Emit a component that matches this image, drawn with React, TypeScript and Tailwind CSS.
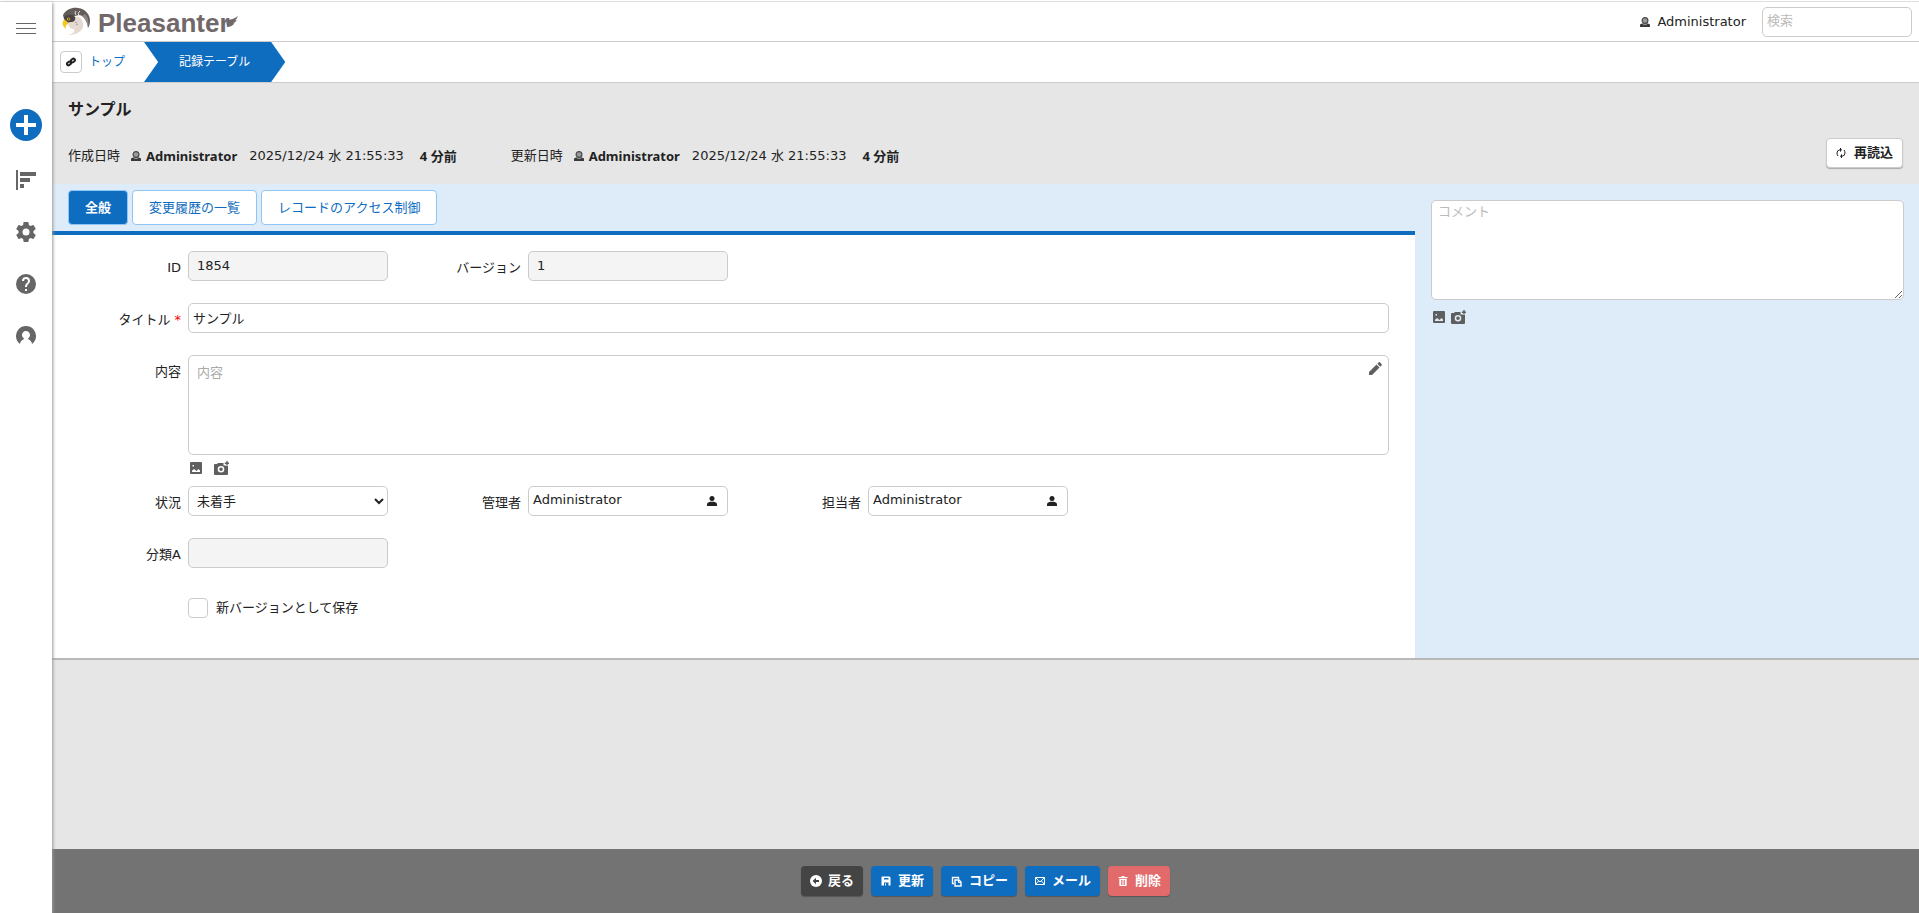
import type { ReactNode } from "react";

const LATIN = "font-['DejaVu_Sans','Noto_Sans_CJK_JP',sans-serif]";
const BOLD = "font-bold font-['Noto_Sans','Noto_Sans_CJK_JP',sans-serif]";
const BOX = "h-[30px] w-[200px] rounded-[5px] border border-[#cbcbcb]";

function Bird() {
  return (
    <svg width="30" height="30" viewBox="0 0 30 30" aria-hidden="true">
      <path d="M2 8C5 2 12 0 17 1c8 1 12 7 12 13 0 3-1 5-2 7 0-7-3-12-9-13L10 10 3 12z" fill="#645b5b" />
      <path d="M24 7c4 4 4 9 3 14-1-6-3-9-6-12z" fill="#8d8583" />
      <path d="M6 13C11 9 18 8 21 13c4 8-2 15-14 15 5-1 7-3 6-6-3 0-5-2-6-5z" fill="#e5d9d1" />
      <path d="M3 10c4-3 9-3 11 0 1 3-1 5-4 5l-6 1z" fill="#4b4446" />
      <circle cx="7.500" cy="12" r="1.600" fill="#e9b91e" />
      <circle cx="7.600" cy="12" r=".7" fill="#222" />
      <path d="M3 13c2 0 4 2 4 4-2 1-3 2-2 5-3-2-5-7-2-9z" fill="#f4c81f" />
      <path d="M15 4q-2 2 0 4M19 4q-3 2-1 5M15 17l2 1M17 15l1 2M14 19l2 1" stroke="#e8e0dc" strokeWidth="1" fill="none" />
      <path d="M14 15l2 1M15 18l2-1" stroke="#8c7f7b" strokeWidth=".7" />
    </svg>
  );
}

function UserGlyph() {
  return (
    <svg width="10" height="10" viewBox="0 0 10 10" aria-hidden="true" className="shrink-0">
      <path d="M0 10V7.500L2 6.500h6l2 1V10z" fill="#3a3a3a" />
      <circle cx="5" cy="3.500" r="2.900" fill="#9a9a9a" stroke="#4a4a4a" strokeWidth="1.200" />
      <path d="M3.200 7.500h3.600" stroke="#aaa" strokeWidth=".8" />
    </svg>
  );
}

function PersonSolid() {
  return (
    <svg width="10" height="10" viewBox="0 0 10 10" aria-hidden="true">
      <circle cx="5" cy="2.500" r="2.500" fill="#222" />
      <path d="M0 10V8.200C0 6.800 2 6 3.300 5.800h3.400C8 6 10 6.800 10 8.200V10z" fill="#222" />
    </svg>
  );
}

function ImageIcon() {
  return (
    <svg width="12" height="12" viewBox="0 0 12 12" aria-hidden="true">
      <path fillRule="evenodd" fill="#5f5f5f" d="M1 0h10a1 1 0 0 1 1 1v10a1 1 0 0 1-1 1H1a1 1 0 0 1-1-1V1a1 1 0 0 1 1-1zM2.500 3v1.500H4V3zM2 10h8V8.500L8.500 7 6.500 9 4 7 2 8.800z" />
    </svg>
  );
}

function CameraIcon() {
  return (
    <svg width="15" height="14" viewBox="0 0 15 14" aria-hidden="true">
      <path fillRule="evenodd" fill="#5f5f5f" d="M4 2h5.500v2.500H12V5h2v8a1 1 0 0 1-1 1H1a1 1 0 0 1-1-1V4a1 1 0 0 1 1-1h2zm3 3a3.300 3.300 0 1 0 0 6.600A3.300 3.300 0 0 0 7 5zm0 1.500a1.800 1.800 0 1 1 0 3.600 1.800 1.800 0 0 1 0-3.600z" />
      <path d="M13 0v4.400M10.800 2.200h4.200" stroke="#5f5f5f" strokeWidth="1.400" />
    </svg>
  );
}

function Field({ id, label, required, children }: { id: string; label: string; required?: boolean; children: ReactNode }) {
  return (
    <div className="flex items-start">
      <label htmlFor={id} className="mr-[7px] w-[120px] shrink-0 pt-[7px] text-right leading-5">
        {label}
        {required && <span className="ml-1 text-[#f00]">*</span>}
      </label>
      {children}
    </div>
  );
}

function Meta({ label }: { label: string }) {
  return (
    <div className="flex items-center whitespace-nowrap">
      <span className="mr-[11px]">{label}</span>
      <UserGlyph />
      <span className={`mr-3 ml-[5px] ${BOLD}`}>Administrator</span>
      <time>2025/12/24 水 21:55:33</time>
      <span className={`ml-4 ${BOLD}`}>4 分前</span>
    </div>
  );
}

function UserField({ id, label }: { id: string; label: string }) {
  return (
    <Field id={id} label={label}>
      <div className={`flex items-center pr-[10px] pl-1 ${BOX}`}>
        <input id={id} readOnly defaultValue="Administrator" className="min-w-0 flex-1 pb-0.5 outline-none" />
        <button type="button" aria-label={`${label}を選択`}><PersonSolid /></button>
      </div>
    </Field>
  );
}

function Command({ label, tone, children }: { label: string; tone: string; children: ReactNode }) {
  return (
    <button type="button" className={`flex h-[30px] items-center gap-[6px] rounded-[4px] px-[9px] text-white shadow-[0_1px_1px_#555] ${BOLD} ${tone}`}>
      {children}
      <span>{label}</span>
    </button>
  );
}

function Sidebar() {
  return (
    <nav className="z-10 flex w-[52px] shrink-0 flex-col items-center bg-white pt-[21px] text-[#666] shadow-[1px_1px_3px_#999]">
      <button type="button" aria-label="メニュー">
        <svg width="20" height="12" viewBox="0 0 20 12" className="block"><path d="M0 .5h20M0 5.500h20M0 10.500h20" stroke="#666" /></svg>
      </button>
      <button type="button" aria-label="新規作成" className="mt-[74px]">
        <svg width="32" height="32" viewBox="0 0 32 32" className="block">
          <circle cx="16" cy="16" r="16" fill="#0f6dc0" />
          <path d="M16 6v20M6 16h20" stroke="#fff" strokeWidth="4" />
        </svg>
      </button>
      <button type="button" aria-label="表示" className="mt-[29px]">
        <svg width="20" height="20" viewBox="0 0 20 20" className="block"><path d="M0 0h2v20H0zM4 2h16v4H4zM4 8h10v4H4zM4 14h4v4H4z" fill="#666" /></svg>
      </button>
      <button type="button" aria-label="管理" className="mt-[30px]">
        <svg width="24" height="24" viewBox="0 0 24 24" className="block"><path fill="#666" d="M19.430 12.980c.04-.32.07-.64.07-.98s-.03-.66-.07-.98l2.110-1.650c.19-.15.24-.42.12-.64l-2-3.460c-.12-.22-.39-.3-.61-.22l-2.490 1c-.52-.4-1.080-.73-1.690-.98l-.38-2.650A.49.49 0 0 0 14 2h-4c-.25 0-.46.18-.49.42l-.38 2.650c-.61.25-1.170.59-1.690.98l-2.490-1c-.23-.09-.49 0-.61.22l-2 3.460c-.13.22-.07.49.12.64l2.110 1.650c-.04.32-.07.65-.07.98s.03.66.07.98l-2.110 1.650c-.19.15-.24.42-.12.64l2 3.460c.12.22.39.3.61.22l2.490-1c.52.4 1.080.73 1.690.98l.38 2.650c.03.24.24.42.49.42h4c.25 0 .46-.18.49-.42l.38-2.650c.61-.25 1.170-.59 1.690-.98l2.490 1c.23.09.49 0 .61-.22l2-3.460c.12-.22.07-.49-.12-.64zM12 15.500a3.500 3.500 0 1 1 0-7 3.500 3.500 0 0 1 0 7z" /></svg>
      </button>
      <button type="button" aria-label="ヘルプ" className="mt-[28px]">
        <svg width="24" height="24" viewBox="0 0 24 24" className="block"><path fill="#666" d="M12 2a10 10 0 1 0 0 20 10 10 0 0 0 0-20zm1 17h-2v-2h2zm2.070-7.750-.9.920C13.450 12.900 13 13.500 13 15h-2v-.5c0-1.100.45-2.100 1.170-2.830l1.240-1.260A2 2 0 1 0 10 9H8a4 4 0 1 1 8 0c0 .88-.36 1.680-.93 2.250z" /></svg>
      </button>
      <button type="button" aria-label="アカウント" className="mt-[30px]">
        <svg width="20" height="20" viewBox="0 0 20 20" className="block"><path fill="#666" d="M4 18A10 10 0 1 1 16 18Q15.500 14.500 12.300 13.300L12 12.500A4 4 0 1 0 8 12.500L7.700 13.300Q4.500 14.500 4 18z" /></svg>
      </button>
    </nav>
  );
}

export default function App() {
  return (
    <div className={`flex min-h-screen flex-col bg-white pt-px text-[13px] text-[#222] ${LATIN}`}>
      <div className="flex flex-1 border-t border-[#dedede] bg-[#e6e6e6]">
        <Sidebar />
        <div className="flex min-w-0 flex-1 flex-col">
          <header className="flex h-10 items-center justify-between border-b border-[#cbcbcb] bg-white pr-[7px] pl-[9px]">
            <a href="#" className="flex items-center" aria-label="Pleasanter">
              <Bird />
              <span className="ml-[7px] flex items-center pt-0.5 font-['Liberation_Sans',sans-serif] text-[26px] leading-8 font-bold text-[#716869]">
                Pleasanter
                <svg width="12" height="14" viewBox="0 0 12 14" className="-ml-[4px]" aria-hidden="true">
                  <path d="M0 4Q7 4 12 0 11 3 9 4.200l1.800 0Q9 7 7 7.300l1.600 0Q6 11 1 11z" fill="#716869" />
                </svg>
              </span>
            </a>
            <div className="flex items-center">
              <UserGlyph />
              <a href="#" className="mr-[16px] ml-[7px]">Administrator</a>
              <input aria-label="検索" placeholder="検索" className="h-[30px] w-[150px] rounded-[5px] border border-[#cbcbcb] px-1 pb-0.5 outline-none placeholder:text-[#bbb]" />
            </div>
          </header>

          <nav className="flex h-[41px] items-center border-b border-[#cbcbcb] bg-white pl-[8px] text-[12px]" aria-label="パンくず">
            <button type="button" aria-label="リンク" className="flex size-[22px] items-center justify-center rounded-[4px] border border-[#cbcbcb]">
              <svg width="10" height="10" viewBox="0 0 12 12" fill="none" stroke="#222" strokeWidth="2.400">
                <rect x="1" y="6" width="5" height="3.500" rx="1.700" transform="rotate(-40 3.500 7.700)" />
                <rect x="5.800" y="2.500" width="5" height="3.500" rx="1.700" transform="rotate(-40 8.300 4.200)" />
              </svg>
            </button>
            <a href="#" className="mr-[19px] ml-[7px] text-[#0f6dc0]">トップ</a>
            <a href="#" className="flex h-10 items-center bg-[#0f6dc0] pr-[35px] pl-[35px] text-white [clip-path:polygon(0_0,90%_0,100%_50%,90%_100%,0_100%,10%_50%)]">記録テーブル</a>
          </nav>

          <div className="flex items-end justify-between pt-[14px] pr-4 pb-4 pl-4">
            <div>
              <h1 className={`text-[16px] leading-6 ${BOLD}`}>サンプル</h1>
              <div className="mt-[23px] flex gap-[54px] leading-6">
                <Meta label="作成日時" />
                <Meta label="更新日時" />
              </div>
            </div>
            <button type="button" className={`flex h-[30px] items-center gap-2 rounded-[4px] border border-[#cbcbcb] bg-white px-[9px] shadow-[0_1px_1px_#aaa] ${BOLD}`}>
              <svg width="10" height="10" viewBox="0 0 10 10" fill="none" stroke="#222" strokeWidth="1">
                <path d="M6 1.800H4Q1 2 1 5q0 2 1 3M4 8.200h2Q9 8 9 5q0-2-1-3M4.500 0v3.600M5.500 6.400V10" />
              </svg>
              再読込
            </button>
          </div>

          <main className="flex border-b-2 border-[#b8b8b8] bg-[#deebf8]">
            <section className="min-w-0 flex-1 bg-white">
              <div role="tablist" className="flex gap-1 border-b-4 border-[#0f6dc0] bg-[#deebf8] pt-[6px] pb-[6px] pl-4">
                <button role="tab" aria-selected="true" type="button" className={`h-[35px] rounded-[4px] border border-[#8fc6f8] bg-[#0f6dc0] px-4 text-white ${BOLD}`}>全般</button>
                <button role="tab" aria-selected="false" type="button" className="h-[35px] rounded-[4px] border border-[#8fc6f8] bg-white px-4 text-[#0f6dc0]">変更履歴の一覧</button>
                <button role="tab" aria-selected="false" type="button" className="h-[35px] rounded-[4px] border border-[#8fc6f8] bg-white px-4 text-[#0f6dc0]">レコードのアクセス制御</button>
              </div>
              <form className="flex flex-col pt-4 pr-[26px] pb-10 pl-[9px]" onSubmit={(e) => e.preventDefault()}>
                <div className="mb-[22px] flex gap-[13px]">
                  <Field id="record-id" label="ID">
                    <input id="record-id" readOnly defaultValue="1854" className={`bg-[#f4f4f4] px-2 pb-0.5 ${BOX}`} />
                  </Field>
                  <Field id="version" label="バージョン">
                    <input id="version" readOnly defaultValue="1" className={`bg-[#f4f4f4] px-2 pb-0.5 ${BOX}`} />
                  </Field>
                </div>
                <div className="mb-[22px]">
                  <Field id="title" label="タイトル" required>
                    <input id="title" defaultValue="サンプル" className="h-[30px] min-w-0 flex-1 rounded-[5px] border border-[#cbcbcb] px-1 pb-0.5 outline-none" />
                  </Field>
                </div>
                <Field id="body" label="内容">
                  <div className="min-w-0 flex-1">
                    <div className="flex h-[100px] items-start rounded-[5px] border border-[#cbcbcb] pt-[7px] pr-[6px] pl-2">
                      <textarea id="body" placeholder="内容" className="h-[84px] min-w-0 flex-1 resize-none leading-5 outline-none placeholder:text-[#aaa]" />
                      <button type="button" aria-label="編集" className="-mt-px">
                        <svg width="13" height="13" viewBox="0 0 13 13" className="block"><path d="M0 13v-3l7.500-7.500 3 3L3 13zM8.300 1.700 9.500.5q.8-.8 1.600 0l1.400 1.400q.8.8 0 1.600L11.300 4.700z" fill="#5f5f5f" /></svg>
                      </button>
                    </div>
                    <div className="flex h-[31px] items-start gap-[12px] pt-[6px] pl-[2px]">
                      <button type="button" aria-label="画像" className="pt-px"><ImageIcon /></button>
                      <button type="button" aria-label="カメラ"><CameraIcon /></button>
                    </div>
                  </div>
                </Field>
                <div className="mb-[22px] flex gap-[13px]">
                  <Field id="status" label="状況">
                    <select id="status" className={`bg-white px-1 ${BOX}`}>
                      <option>未着手</option>
                    </select>
                  </Field>
                  <UserField id="manager" label="管理者" />
                  <UserField id="owner" label="担当者" />
                </div>
                <Field id="class-a" label="分類A">
                  <input id="class-a" readOnly className={`bg-[#f4f4f4] px-2 ${BOX}`} />
                </Field>
                <label className="mt-[30px] ml-[127px] flex items-center gap-2 self-start leading-5">
                  <input type="checkbox" className="size-[20px] appearance-none rounded-[4px] border border-[#cbcbcb] bg-white checked:bg-[#0f6dc0]" />
                  新バージョンとして保存
                </label>
              </form>
            </section>

            <aside className="w-[27%] shrink-0 pt-4 pr-[15px] pl-4">
              <textarea aria-label="コメント" placeholder="コメント" className="block h-[100px] w-full resize rounded-[5px] border border-[#cbcbcb] bg-white px-[6px] py-[1px] leading-5 outline-none placeholder:text-[#bbb]" />
              <div className="flex items-start gap-[6px] pt-[10px] pl-[2px]">
                <button type="button" aria-label="画像" className="pt-px"><ImageIcon /></button>
                <button type="button" aria-label="カメラ"><CameraIcon /></button>
              </div>
            </aside>
          </main>

          <footer className="mt-auto flex h-[64px] items-center justify-center gap-2 bg-[#737373]">
            <Command label="戻る" tone="bg-[#444]">
              <svg width="12" height="12" viewBox="0 0 12 12"><circle cx="6" cy="6" r="6" fill="#fff" /><path d="M9 6H5" stroke="#444" strokeWidth="2" /><path d="M6 2.800V9.200L2.600 6z" fill="#444" /></svg>
            </Command>
            <Command label="更新" tone="bg-[#0f6dc0]">
              <svg width="12" height="10" viewBox="0 0 12 10"><path fillRule="evenodd" fill="#fff" d="M2 .5h7.500l1 1v8H1.500V1zM4 2v1.500h4.500V2zM4 6.500v3h1v-2h1v2h2.500v-3z" /></svg>
            </Command>
            <Command label="コピー" tone="bg-[#0f6dc0]">
              <svg width="13" height="11" viewBox="0 0 13 11" fill="none" stroke="#fff"><path d="M4 7.500H2.500v-6h6V3" strokeWidth="1.400" /><path d="M5 4h4l2 2v4H5z" strokeWidth="1.400" /><path d="M8.500 4v2.500H11" /></svg>
            </Command>
            <Command label="メール" tone="bg-[#0f6dc0]">
              <svg width="12" height="10" viewBox="0 0 12 10" fill="none" stroke="#fff"><path d="M1.500 1.500h9v7h-9zM1.500 1.500 6 6l4.500-4.500M1.500 8.500l3-3.500M10.500 8.500l-3-3.500" /></svg>
            </Command>
            <Command label="削除" tone="bg-[#e26a6a]">
              <svg width="12" height="10" viewBox="0 0 12 10"><path fillRule="evenodd" fill="#fff" d="M4.500 0h3v1h3v1.200h-9V1h3zM2.300 3h7.400v6a1 1 0 0 1-1 1H3.300a1 1 0 0 1-1-1zM4 4v5h.8V4zm1.600 0v5h.8V4zm1.600 0v5H8V4z" /></svg>
            </Command>
          </footer>
        </div>
      </div>
    </div>
  );
}
